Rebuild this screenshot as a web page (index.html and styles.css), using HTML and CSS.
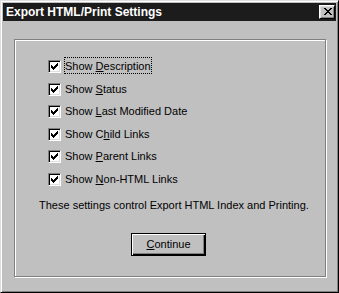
FILE: index.html
```html
<!DOCTYPE html>
<html lang="en">
<head>
  <meta charset="UTF-8">
  <title>Export HTML/Print Settings</title>
  <link rel="stylesheet" href="styles.css">
</head>
<body>
  <div class="window">
    <div class="titlebar">
      <span class="title">Export HTML/Print Settings</span>
      <button class="close" type="button" aria-label="Close">
        <svg width="8" height="7" viewBox="0 0 8 7" shape-rendering="crispEdges">
          <path fill="#000" d="M0 0h2v1h-2zM6 0h2v1h-2zM1 1h2v1h-2zM5 1h2v1h-2zM2 2h4v1h-4zM3 3h2v1h-2zM2 4h4v1h-4zM1 5h2v1h-2zM5 5h2v1h-2zM0 6h2v1h-2zM6 6h2v1h-2z"/>
        </svg>
      </button>
    </div>

    <div class="group">
      <div class="options">
        <label class="option">
          <span class="box"><svg class="check" width="7" height="7" viewBox="0 0 7 7" shape-rendering="crispEdges"><path d="M6 0h1v1h-1zM5 1h2v1h-2zM0 2h1v1h-1zM4 2h3v1h-3zM0 3h2v1h-2zM3 3h3v1h-3zM0 4h5v1h-5zM1 5h3v1h-3zM2 6h1v1h-1z"/></svg></span>
          <span class="text focused">Show <u>D</u>escription</span>
        </label>
        <label class="option">
          <span class="box"><svg class="check" width="7" height="7" viewBox="0 0 7 7" shape-rendering="crispEdges"><path d="M6 0h1v1h-1zM5 1h2v1h-2zM0 2h1v1h-1zM4 2h3v1h-3zM0 3h2v1h-2zM3 3h3v1h-3zM0 4h5v1h-5zM1 5h3v1h-3zM2 6h1v1h-1z"/></svg></span>
          <span class="text">Show <u>S</u>tatus</span>
        </label>
        <label class="option">
          <span class="box"><svg class="check" width="7" height="7" viewBox="0 0 7 7" shape-rendering="crispEdges"><path d="M6 0h1v1h-1zM5 1h2v1h-2zM0 2h1v1h-1zM4 2h3v1h-3zM0 3h2v1h-2zM3 3h3v1h-3zM0 4h5v1h-5zM1 5h3v1h-3zM2 6h1v1h-1z"/></svg></span>
          <span class="text">Show <u>L</u>ast Modified Date</span>
        </label>
        <label class="option">
          <span class="box"><svg class="check" width="7" height="7" viewBox="0 0 7 7" shape-rendering="crispEdges"><path d="M6 0h1v1h-1zM5 1h2v1h-2zM0 2h1v1h-1zM4 2h3v1h-3zM0 3h2v1h-2zM3 3h3v1h-3zM0 4h5v1h-5zM1 5h3v1h-3zM2 6h1v1h-1z"/></svg></span>
          <span class="text">Show C<u>h</u>ild Links</span>
        </label>
        <label class="option">
          <span class="box"><svg class="check" width="7" height="7" viewBox="0 0 7 7" shape-rendering="crispEdges"><path d="M6 0h1v1h-1zM5 1h2v1h-2zM0 2h1v1h-1zM4 2h3v1h-3zM0 3h2v1h-2zM3 3h3v1h-3zM0 4h5v1h-5zM1 5h3v1h-3zM2 6h1v1h-1z"/></svg></span>
          <span class="text">Show <u>P</u>arent Links</span>
        </label>
        <label class="option">
          <span class="box"><svg class="check" width="7" height="7" viewBox="0 0 7 7" shape-rendering="crispEdges"><path d="M6 0h1v1h-1zM5 1h2v1h-2zM0 2h1v1h-1zM4 2h3v1h-3zM0 3h2v1h-2zM3 3h3v1h-3zM0 4h5v1h-5zM1 5h3v1h-3zM2 6h1v1h-1z"/></svg></span>
          <span class="text">Show <u>N</u>on-HTML Links</span>
        </label>
      </div>

      <p class="note">These settings control Export HTML Index and Printing.</p>

      <button class="default" type="button"><u>C</u>ontinue</button>
    </div>
  </div>
</body>
</html>
```

FILE: styles.css
```css
html, body {
  margin: 0;
  background: #c0c0c0;
}

body {
  font-family: 'Liberation Sans', Arial, sans-serif;
  font-size: 11px;
  color: #000;
}

u {
  text-decoration: underline;
  text-underline-offset: 1px;
}

.window {
  width: 339px;
  height: 293px;
  box-sizing: border-box;
  border: 1px solid;
  border-color: #dfdfdf #000 #000 #dfdfdf;
  box-shadow: inset 1px 1px 0 #fff, inset -1px -1px 0 #808080;
  padding: 2px;
  background: #c0c0c0;
}

.titlebar {
  height: 18px;
  background: #1c1c1c;
  display: flex;
  align-items: center;
  justify-content: space-between;
  padding: 0 1px 0 3px;
}

.title {
  color: #fff;
  font-weight: bold;
  font-size: 12px;
  line-height: 18px;
}

.close {
  width: 16px;
  height: 14px;
  box-sizing: border-box;
  margin: 0;
  padding: 2px 0 0 4px;
  border: 1px solid;
  border-color: #fff #000 #000 #fff;
  box-shadow: inset 1px 1px 0 #dfdfdf, inset -1px -1px 0 #808080;
  background: #c0c0c0;
  display: flex;
  align-items: flex-start;
}

.close svg {
  display: block;
}

.group {
  margin: 18px 10px 0 11px;
  height: 238px;
  box-sizing: border-box;
  border: 1px solid #808080;
  box-shadow: inset 1px 1px 0 #fff, 1px 1px 0 #fff;
  padding: 17px 0 0 24px;
  display: flex;
  flex-direction: column;
}

.options {
  display: flex;
  flex-direction: column;
  gap: 5.6px;
  padding-left: 9px;
}

.option {
  display: flex;
  align-items: flex-end;
  gap: 3px;
  height: 17px;
}

.box {
  width: 13px;
  height: 13px;
  box-sizing: border-box;
  border: 1px solid;
  border-color: #808080 #fff #fff #808080;
  box-shadow: inset 1px 1px 0 #000, inset -1px -1px 0 #dfdfdf;
  background: #fff;
  padding: 2px;
  margin-bottom: 1px;
}

.check {
  display: block;
  fill: #000;
}

.text {
  border: 1px solid transparent;
  padding: 2px 0 0 0;
  line-height: 13px;
}

.text.focused {
  border: 1px dotted #000;
}

.note {
  margin: 12px 0 0 0;
  line-height: 13px;
}

.default {
  margin: 21px 0 0 92px;
  width: 75px;
  height: 23px;
  box-sizing: border-box;
  padding: 0;
  border: 1px solid #000;
  box-shadow: inset 1px 1px 0 #fff, inset -1px -1px 0 #000, inset -2px -2px 0 #808080;
  background: #c0c0c0;
  font-family: 'Liberation Sans', Arial, sans-serif;
  font-size: 11px;
  color: #000;
}
```
